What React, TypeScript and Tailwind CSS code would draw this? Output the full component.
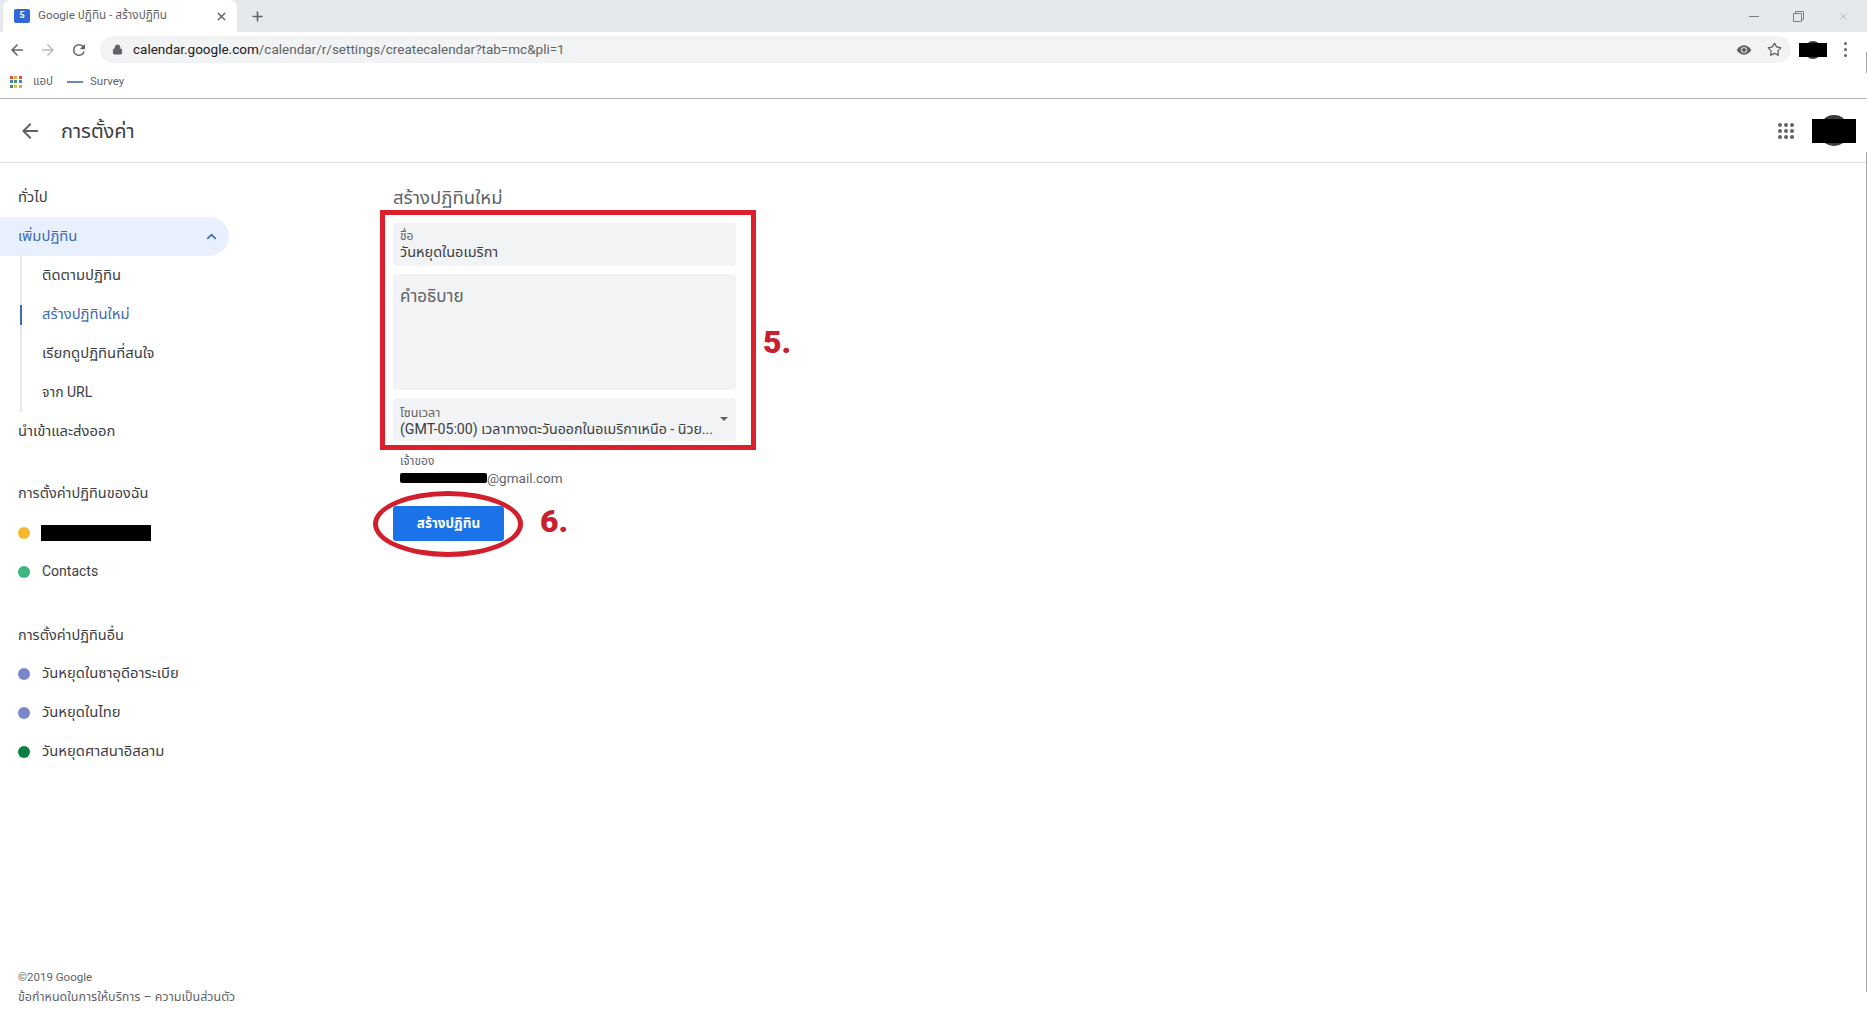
import React from 'react'
import { ChevronUp, Lock, Plus, Star, X } from 'lucide-react'

const font = "font-['Roboto','Noto_Sans','Noto_Sans_Thai','DejaVu_Sans',sans-serif]"

const AppsGrid = () => {
    const colors = ['#d9503f', '#e8a33d', '#d9503f', '#4a7fd0', '#3f9a5b', '#4a7fd0', '#3f9a5b', '#e8c33d', '#e8a33d']
    return (
        <div className="grid grid-cols-3 gap-[1px] w-[12px] h-[12px]">
            {colors.map((c, i) => (
                <span key={i} className="w-[3px] h-[3px]" style={{ backgroundColor: c }} />
            ))}
        </div>
    )
}

const ArrowIcon = ({ flip, className }: { flip?: boolean; className: string }) => (
    <svg viewBox="0 0 24 24" className={className} fill="currentColor" style={flip ? { transform: 'scaleX(-1)' } : undefined}>
        <path d="M20 11H7.83l5.59-5.59L12 4l-8 8 8 8 1.41-1.41L7.83 13H20v-2z" />
    </svg>
)

const TabStrip = () => (
    <div className="h-[32px] bg-[#e6e9ec] flex items-stretch">
        <div className="ml-[3px] w-[234px] bg-white rounded-t-lg flex items-center pl-[11px] pr-[9px]">
            <div className="w-[16px] h-[14px] bg-[#3367d6] rounded-[2px] flex items-center justify-center text-white text-[9px] font-bold">5</div>
            <span className="ml-[8px] text-[11.7px] text-[#5f6368] flex-1 truncate">Google ปฏิทิน - สร้างปฏิทิน</span>
            <X className="w-[13px] h-[13px] text-[#5f6368]" strokeWidth={2.5} />
        </div>
        <div className="ml-[13px] flex items-center">
            <Plus className="w-[15px] h-[15px] text-[#5f6368]" strokeWidth={2.5} />
        </div>
        <div className="ml-auto flex items-center gap-[34px] pr-[18px] text-[#7b7f83]">
            <div className="w-[10px] h-px bg-[#7b7f83]" />
            <svg viewBox="0 0 11 11" className="w-[11px] h-[11px]" fill="none" stroke="currentColor">
                <path d="M.5 2.5h8v8h-8zM2.5 2.5v-2h8v8h-2" />
            </svg>
            <X className="w-[11px] h-[11px]" strokeWidth={1} />
        </div>
    </div>
)

const Toolbar = () => (
    <div className="h-[34px] pt-[1px] bg-white flex items-center text-[#5f6368]">
        <ArrowIcon className="ml-[8px] w-[18px] h-[18px]" />
        <ArrowIcon flip className="ml-[13px] w-[18px] h-[18px] text-[#b9bcbf]" />
        <svg viewBox="0 0 24 24" fill="currentColor" className="ml-[13px] w-[18px] h-[18px]">
            <path d="M17.65 6.35A7.96 7.96 0 0 0 12 4a8 8 0 1 0 7.73 10h-2.08A6 6 0 1 1 12 6c1.66 0 3.14.69 4.22 1.78L13 11h7V4l-2.35 2.35z" />
        </svg>
        <div className="ml-[12px] h-[27px] w-[1691px] bg-[#f1f3f4] rounded-full flex items-center pl-[12px] pr-[9px]">
            <Lock className="w-[11px] h-[11px] text-[#5f6368] fill-[#5f6368]" />
            <span className="ml-[10px] text-[13.5px] text-[#202124]">calendar.google.com<span className="text-[#5f6368]">/calendar/r/settings/createcalendar?tab=mc&amp;pli=1</span></span>
            <svg viewBox="0 0 24 24" className="ml-auto w-[16px] h-[16px]" fill="currentColor">
                <path d="M12 5C7 5 3 8.500 1 12c2 3.500 6 7 11 7s9-3.500 11-7c-2-3.500-6-7-11-7zm0 11.500a4.500 4.500 0 1 1 0-9 4.500 4.500 0 0 1 0 9z" />
                <path d="M12 8l4 4-4 4-4-4z" />
            </svg>
            <Star className="ml-[15px] w-[15px] h-[15px]" strokeWidth={2} />
        </div>
        <div className="ml-[8px] w-[28px] h-[14px] relative">
            <div className="absolute left-[6px] top-[-2px] w-[16px] h-[18px] rounded-full bg-[#3a3a3a]" />
            <div className="absolute inset-0 bg-black" />
        </div>
        <div className="ml-[17px] flex flex-col gap-[3px]">
            <span className="w-[3px] h-[3px] rounded-full bg-[#5f6368]" />
            <span className="w-[3px] h-[3px] rounded-full bg-[#5f6368]" />
            <span className="w-[3px] h-[3px] rounded-full bg-[#5f6368]" />
        </div>
    </div>
)

const BookmarkBar = () => (
    <div className="h-[33px] bg-white border-b border-[#b4b4b4] flex items-center text-[11.5px] text-[#5f6368]">
        <div className="ml-[10px]"><AppsGrid /></div>
        <span className="ml-[11px]">แอป</span>
        <div className="ml-[14px] w-[16px] h-[2px] bg-[#6f86b8]" />
        <span className="ml-[7px]">Survey</span>
    </div>
)

const Header = () => (
    <div className="h-[64px] border-b border-[#e0e0e0] flex items-center text-[#5f6368]">
        <ArrowIcon className="ml-[18px] w-[24px] h-[24px]" />
        <span className="ml-[19px] text-[20px] text-[#3c4043]">การตั้งค่า</span>
        <div className="ml-auto grid grid-cols-3 gap-[2px] w-[16px]">
            {Array.from({ length: 9 }).map((_, i) => (
                <span key={i} className="w-[4px] h-[4px] rounded-full bg-[#5f6368]" />
            ))}
        </div>
        <div className="ml-[18px] mr-[11px] w-[44px] h-[24px] relative">
            <div className="absolute left-[7px] top-[-4px] w-[30px] h-[31px] rounded-full bg-[#3a3a3a]" />
            <div className="absolute inset-0 bg-black" />
        </div>
    </div>
)

const NavItem = ({ label }: { label: string }) => (
    <div className="h-[39px] flex items-center pl-[18px] text-[14.8px] text-[#3c4043]">{label}</div>
)

const SubItem = ({ label, active }: { label: string; active?: boolean }) => (
    <div className={`h-[39px] flex items-center pl-[20px] text-[14.8px] ${active ? 'text-[#3f6ab3]' : 'text-[#3c4043]'}`}>
        {label}
    </div>
)

const SectionTitle = ({ label, className }: { label: string; className: string }) => (
    <div className={`pl-[18px] text-[14.500px] text-[#3c4043] h-[20px] flex items-center ${className}`}>{label}</div>
)

const CalendarRow = ({ color, label }: { color: string; label?: string }) => (
    <div className="h-[39px] flex items-center pl-[18px] text-[14.8px] text-[#3c4043]">
        <span className="w-[12px] h-[12px] rounded-full" style={{ backgroundColor: color }} />
        {label
            ? <span className="ml-[12px]">{label}</span>
            : <span className="ml-[11px] w-[110px] h-[16px] bg-black" />}
    </div>
)

const Sidebar = () => (
    <div className="w-[393px] shrink-0 flex flex-col pt-[15px] relative">
        <NavItem label="ทั่วไป" />
        <div className="w-[229px] h-[39px] bg-[#e8f0fe] rounded-r-full flex items-center pl-[18px] pr-[10px] text-[14.8px] text-[#3f6ab3]">
            <span className="flex-1">เพิ่มปฏิทิน</span>
            <ChevronUp className="w-[15px] h-[15px] text-[#3f6ab3]" strokeWidth={2.5} />
        </div>
        <div className="ml-[20px] mt-[0px] border-l-2 border-[#e8eaed] relative">
            <div className="absolute -left-[2px] top-[39px] mt-[10px] w-[2px] h-[20px] bg-[#3f6ab3]" />
            <SubItem label="ติดตามปฏิทิน" />
            <SubItem label="สร้างปฏิทินใหม่" active />
            <SubItem label="เรียกดูปฏิทินที่สนใจ" />
            <div className="h-[39px] flex items-center pl-[20px] text-[14px] text-[#3c4043]">จาก URL</div>
        </div>
        <NavItem label="นำเข้าและส่งออก" />
        <SectionTitle label="การตั้งค่าปฏิทินของฉัน" className="mt-[33px]" />
        <div className="mt-[9px]">
            <CalendarRow color="#f4b92f" />
            <div className="h-[39px] flex items-center pl-[18px] text-[14px] text-[#3c4043]">
                <span className="w-[12px] h-[12px] rounded-full bg-[#3fb57f]" />
                <span className="ml-[12px]">Contacts</span>
            </div>
        </div>
        <SectionTitle label="การตั้งค่าปฏิทินอื่น" className="mt-[35px]" />
        <div className="mt-[8px]">
            <CalendarRow color="#7986cb" label="วันหยุดในซาอุดีอาระเบีย" />
            <CalendarRow color="#7986cb" label="วันหยุดในไทย" />
            <CalendarRow color="#0b8043" label="วันหยุดศาสนาอิสลาม" />
        </div>
        <div className="mt-auto mb-[5px] pl-[18px] text-[11.500px] leading-[19px] text-[#5f6368]">
            <div>©2019 Google</div>
            <div className="text-[12.5px]">ข้อกำหนดในการให้บริการ – ความเป็นส่วนตัว</div>
        </div>
    </div>
)

const Form = () => (
    <div className="w-[343px] pt-[23px] relative">
        <div className="text-[18.500px] leading-[24px] text-[#5f6368] h-[37px]">สร้างปฏิทินใหม่</div>
        <div className="h-[43px] bg-[#f1f3f4] rounded-[4px] px-[7px] pt-[5px]">
            <div className="text-[12px] leading-[16px] text-[#5f6368]">ชื่อ</div>
            <div className="text-[14.500px] leading-[18px] text-[#3c4043]">วันหยุดในอเมริกา</div>
        </div>
        <div className="mt-[8px] h-[116px] bg-[#f1f3f4] rounded-[4px] px-[7px] pt-[10px] text-[17px] leading-[24px] text-[#5f6368]">คำอธิบาย</div>
        <div className="mt-[8px] h-[43px] bg-[#f1f3f4] rounded-[4px] px-[7px] pt-[7px] relative">
            <div className="text-[12.5px] leading-[15px] text-[#5f6368]">โซนเวลา</div>
            <div className="text-[14.200px] leading-[18px] text-[#3c4043] whitespace-nowrap">(GMT-05:00) เวลาทางตะวันออกในอเมริกาเหนือ - นิวย...</div>
            <div className="absolute right-[8px] top-[19px] w-0 h-0 border-x-[4px] border-x-transparent border-t-[4px] border-t-[#5f6368]" />
        </div>
        <div className="mt-[13px] px-[7px]">
            <div className="text-[12px] leading-[15px] text-[#5f6368]">เจ้าของ</div>
            <div className="flex items-center h-[18px] text-[13.5px] text-[#5f6368]">
                <span className="w-[87px] h-[10px] bg-black rounded-[2px]" />@gmail.com
            </div>
        </div>
        <button className="mt-[19px] w-[111px] h-[35px] rounded-[3px] bg-[#1a73e8] text-white text-[13.5px] font-bold">สร้างปฏิทิน</button>

        {/* red marks added on top of the screenshot */}
        <div className="absolute left-[-13px] top-[47px] w-[376px] h-[240px] border-[5px] border-[#dc1f2b]" />
        <div className="absolute left-[370px] top-[160px] text-[32px] leading-[38px] font-black text-[#c8202c]">5.</div>
        <div className="absolute left-[-20px] top-[328px] w-[150px] h-[66px] rounded-[50%] border-[5px] border-[#d31f2b]" />
        <div className="absolute left-[147px] top-[339px] text-[32px] leading-[38px] font-black text-[#c8202c]">6.</div>
    </div>
)

export default function App() {
    return (
        <div className={`h-[1011px] flex flex-col overflow-hidden bg-white relative ${font}`}>
            <TabStrip />
            <Toolbar />
            <BookmarkBar />
            <Header />
            <div className="flex-1 flex min-h-0">
                <Sidebar />
                <Form />
            </div>
            {/* window edge */}
            <div className="absolute right-0 top-[52px] w-px h-[21px] bg-[#a8a8a8]" />
            <div className="absolute right-0 top-[152px] w-px h-[840px] bg-[#a8a8a8]" />
        </div>
    )
}
